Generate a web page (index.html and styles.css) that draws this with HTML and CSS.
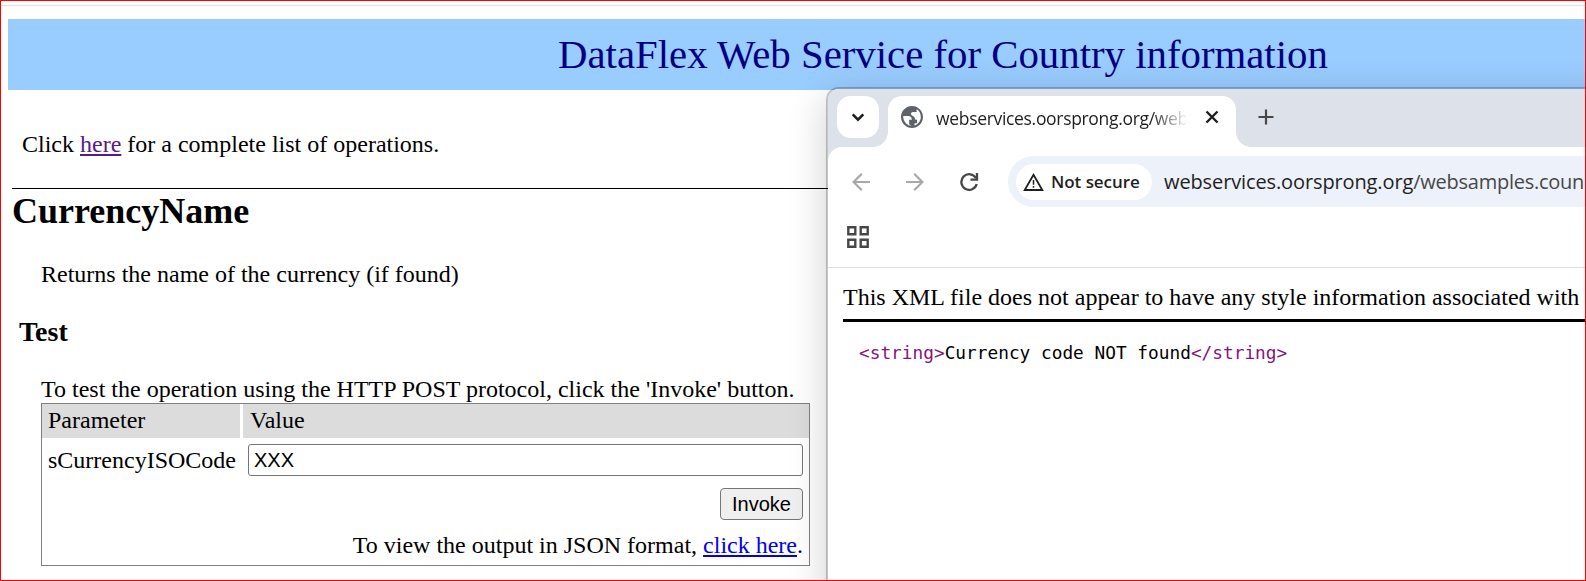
FILE: index.html
```html
<!DOCTYPE html>
<html lang="en">
<head>
<meta charset="utf-8">
<title>DataFlex Web Service for Country information</title>
<link rel="stylesheet" href="styles.css">
</head>
<body>
<div class="screen">
  <main class="page">
    <header class="banner">DataFlex Web Service for Country information</header>
    <p class="intro">Click <a class="visited" href="#">here</a> for a complete list of operations.</p>
    <section class="operation">
      <h2 class="op-name">CurrencyName</h2>
      <p class="desc">Returns the name of the currency (if found)</p>
      <h3 class="test">Test</h3>
      <p class="hint">To test the operation using the HTTP POST protocol, click the 'Invoke' button.</p>
      <form class="params">
        <div class="head">Parameter</div>
        <div class="head">Value</div>
        <label class="label" for="code">sCurrencyISOCode</label>
        <input class="field" id="code" type="text" value="XXX">
        <div class="submit"><button class="invoke" type="button">Invoke</button></div>
        <div class="json">To view the output in JSON format, <a href="#">click here</a>.</div>
      </form>
    </section>
  </main>

  <div class="window">
    <div class="tabstrip">
      <div class="tabsearch"><svg width="42" height="42" viewBox="0 0 42 42"><path d="M15.700 18.300l5.300 5.300 5.300-5.300" fill="none" stroke="#1f1f1f" stroke-width="2.600"/></svg></div>
      <div class="tab">
        <svg class="globe" width="22" height="22" viewBox="2 2 20 20"><path fill="#5f6368" d="M12 2C6.480 2 2 6.480 2 12s4.480 10 10 10 10-4.480 10-10S17.520 2 12 2zM4 12c0-.35.020-.69.060-1.020h4.440c2.280.010 3.390 1.160 3.330 3.450H9.400v4.140c.82.760 1.680 1.230 2.600 1.410A8 8 0 0 1 4 12zm10.300 7.650V17.600h2.300v-3.200h-1.500c-.200-1.600-1.100-2.800-2.700-3.600-1-.500-1.300-1-1.300-1.700 0-1 .800-1.600 2.300-1.600h2.800V4.940C18.500 6.200 20 8.800 20 12c0 3.600-2.400 6.700-5.700 7.650z"/></svg>
        <span class="tab-title">webservices.oorsprong.org/web</span>
        <svg class="close" width="14" height="14" viewBox="0 0 14 14"><path d="M1.500 1.500l11 11M12.500 1.500l-11 11" stroke="#1f1f1f" stroke-width="2.400"/></svg>
      </div>
      <svg class="plus" width="16" height="16" viewBox="0 0 16 16"><path d="M8 .5v15M.5 8h15" stroke="#474747" stroke-width="2.200"/></svg>
    </div>
    <div class="toolbar">
      <svg class="back" width="18" height="18" viewBox="0 0 18 18"><path d="M18 9H1.800M9.800.8L1.600 9l8.200 8.200" fill="none" stroke="#a8a8a8" stroke-width="2.200"/></svg>
      <svg class="forward" width="18" height="18" viewBox="0 0 18 18"><path d="M0 9h16.200M8.200.8L16.400 9l-8.200 8.200" fill="none" stroke="#a8a8a8" stroke-width="2.200"/></svg>
      <svg class="reload" width="19" height="18" viewBox="0 0 19 18"><path d="M16.700 11A7.800 7.800 0 1 1 16 5.300" fill="none" stroke="#474747" stroke-width="2.300"/><path d="M17 0v6.700h-6.500" fill="none" stroke="#474747" stroke-width="2.300"/></svg>
      <div class="omnibox">
        <div class="chip">
          <svg width="21" height="18" viewBox="0 0 21 18"><path d="M10.500 1.800L19.300 17H1.700z" fill="none" stroke="#1f1f1f" stroke-width="1.800"/><path d="M10.500 7v4.800M10.500 13v1.800" stroke="#1f1f1f" stroke-width="1.500"/></svg>
          <span class="secure">Not secure</span>
        </div>
        <span class="url">webservices.oorsprong.org<span class="path">/websamples.coun</span></span>
      </div>
    </div>
    <div class="bookmarks">
      <svg width="22" height="22" viewBox="0 0 22 22"><path d="M1.300 1.300h7v7h-7zM13.700 1.300h7v7h-7zM1.300 13.700h7v7h-7zM13.700 13.700h7v7h-7z" fill="none" stroke="#474747" stroke-width="2.400"/></svg>
    </div>
    <div class="document">
      <div class="notice">This XML file does not appear to have any style information associated with</div>
      <div class="xml"><span class="tag">&lt;string&gt;</span>Currency code NOT found<span class="tag">&lt;/string&gt;</span></div>
    </div>
  </div>
</div>
</body>
</html>
```
FILE: styles.css
```css
* { box-sizing: border-box; }
body { margin: 0; background: #fff; color: #000; font-family: "Liberation Serif", serif; font-size: 24px; line-height: 27px; }
p, h2, h3 { margin: 0; }
svg { display: block; flex: none; }
.screen { position: relative; width: 1586px; height: 581px; overflow: hidden; }
.screen::after { content: ""; position: absolute; inset: 0; border: 1px solid #f00; pointer-events: none; }
.page { padding: 5px 0 0; white-space: nowrap; }
.page::before { content: ""; display: block; height: 1px; background: #dfdfdf; margin-bottom: 13px; }
.banner { margin-left: 8px; padding-left: 550px; height: 71px; background: #9cf; color: navy; font-size: 40.8px; line-height: 71px; }
.intro { margin: 41px 0 30px 22px; }
a { color: #00e; text-decoration-thickness: 2px; text-underline-offset: 2px; }
.visited { color: #551a8b; }
.operation { margin-left: 12px; border-top: 1px solid #000; padding-top: 2px; }
.op-name { font-size: 36px; line-height: 40px; }
.desc { margin: 30px 0 28px 29px; }
.test { margin-left: 7px; font-size: 28px; line-height: 32px; }
.hint { margin: 28px 0 0 29px; }
.params { margin-left: 29px; width: 769px; height: 163px; border: 1px solid #808080; display: grid; grid-template-columns: 198px 566px; column-gap: 3px; grid-template-rows: 34px 44px 44px 39px; align-items: center; }
.head { background: #dcdcdc; height: 34px; padding-left: 6px; line-height: 33px; }
.head + .head { padding-left: 7px; }
.label { padding-left: 6px; }
.field { margin: 0 0 0 5px; width: 555px; height: 32px; border: 1px solid #767676; border-radius: 3px; padding: 0 5px; font: 20px "Liberation Sans", sans-serif; color: #000; background: #fff; }
.submit { grid-column: 1 / 3; display: flex; justify-content: flex-end; padding-right: 6px; }
.invoke { width: 83px; height: 32px; padding: 0; border: 1px solid #767676; border-radius: 4px; background: #efefef; color: #000; font: 20px "Liberation Sans", sans-serif; }
.json { grid-column: 1 / 3; text-align: right; padding-right: 6px; }

.window { position: absolute; left: 826px; top: 87px; width: 800px; height: 560px; border: 2px solid rgba(0, 0, 0, .22); border-radius: 13px; background: #fff; background-clip: padding-box; box-shadow: 0 9px 38px rgba(0, 0, 0, .19); overflow: hidden; white-space: nowrap; font-family: "Open Sans", sans-serif; }
.tabstrip { display: flex; height: 58px; background: #dde1e9; padding: 7px 0 0 9px; }
.tabsearch { width: 42px; height: 42px; border-radius: 14px; background: #fff; }
.tab { position: relative; display: flex; align-items: flex-start; width: 348px; height: 51px; margin-left: 9px; padding: 10px 0 0 13px; border-radius: 14px 14px 0 0; background: #fff; }
.tab::before, .tab::after { content: ""; position: absolute; bottom: 0; width: 15px; height: 15px; }
.tab::before { right: 100%; background: radial-gradient(circle at 0 0, transparent 14.5px, #fff 15.2px); }
.tab::after { left: 100%; background: radial-gradient(circle at 100% 0, transparent 14.5px, #fff 15.2px); }
.tab-title { width: 250px; margin-left: 13px; overflow: hidden; font-size: 17.5px; line-height: 24px; letter-spacing: -.32px; color: #1f1f1f; -webkit-mask-image: linear-gradient(90deg, #000 215px, transparent 252px); mask-image: linear-gradient(90deg, #000 215px, transparent 252px); }
.close { margin: 4px 0 0 19px; }
.plus { margin: 13px 0 0 22px; }
.toolbar { display: flex; align-items: center; height: 69px; padding-left: 24px; background: radial-gradient(circle at 14px 14px, #fff 13.6px, #dde1e9 14.4px) 0 0 / 14px 14px no-repeat, linear-gradient(#fff, #fff) 14px 0 no-repeat; }
.forward { margin-left: 36px; }
.reload { margin-left: 36px; }
.omnibox { display: flex; align-items: center; width: 700px; height: 51px; margin-left: 29px; padding-left: 8px; border-radius: 26px; background: #ecf1fa; flex: none; }
.chip { display: flex; align-items: center; width: 136px; height: 36px; padding-left: 7px; border-radius: 18px; background: #fff; }
.secure { margin-left: 7px; font-size: 17px; font-weight: 600; letter-spacing: -.05px; color: #1f1f1f; }
.url { margin-left: 12px; font-size: 20px; letter-spacing: -.12px; color: #1f1f1f; }
.path { color: #474747; letter-spacing: -.25px; }
.bookmarks { height: 52px; padding: 10px 0 0 19px; border-bottom: 1px solid #dfdfdf; }
.document { padding: 16px 0 0 15px; font-family: "Liberation Serif", serif; }
.notice { height: 38px; border-bottom: 3px solid #000; }
.xml { padding: 17px 0 0 16px; font: 17.8px/27px "DejaVu Sans Mono", monospace; }
.tag { color: #881280; }
```
